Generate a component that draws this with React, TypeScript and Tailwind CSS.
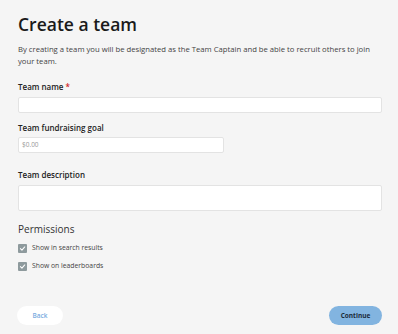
import React from "react";

const font = { fontFamily: '"Open Sans", "Noto Sans", sans-serif' };

function Check({ label }: { label: string }) {
  return (
    <div className="flex items-center h-[12px] gap-[5px]">
      <div className="w-[9px] h-[9px] rounded-[1px] bg-[#8e9a9d] flex items-center justify-center">
        <svg width="7" height="7" viewBox="0 0 10 10">
          <path d="M2 5.2 L4.2 7.3 L8.2 2.8" fill="none" stroke="#ffffff" strokeWidth="1.5" strokeLinecap="round" strokeLinejoin="round" />
        </svg>
      </div>
      <span className="text-[6.8px] leading-[12px] text-[#444]">{label}</span>
    </div>
  );
}

export default function App() {
  return (
    <div style={font} className="w-[398px] h-[334px] bg-[#f5f5f5] pl-[18px] pr-[16px] pt-[12px] pb-[9px] flex flex-col text-[#222]">
      <h1 className="text-[17.5px] leading-[24px] font-semibold text-[#1a1a1a]">Create a team</h1>
      <p className="mt-[7px] text-[7.7px] leading-[12px] text-[#444] pr-[4px]">
        By creating a team you will be designated as the Team Captain and be able to recruit others to join your team.
      </p>

      <label className="mt-[14px] text-[8px] leading-[12px] font-semibold text-[#222]">
        Team name <span className="text-[#d0242b]">*</span>
      </label>
      <div className="mt-[4px] h-[16px] w-[364px] bg-white border border-[#e3e3e3] rounded-[2px]" />

      <label className="mt-[9px] text-[8px] leading-[12px] font-semibold text-[#222]">Team fundraising goal</label>
      <div className="mt-[3px] h-[16px] w-[206px] bg-white border border-[#e3e3e3] rounded-[2px] flex items-center px-[3px]">
        <span className="text-[6.5px] text-[#999]">$0.00</span>
      </div>

      <label className="mt-[16px] text-[8px] leading-[12px] font-semibold text-[#222]">Team description</label>
      <div className="mt-[4px] h-[26px] w-[364px] bg-white border border-[#e3e3e3] rounded-[2px]" />

      <h2 className="mt-[11px] text-[10px] leading-[14px] text-[#333]">Permissions</h2>
      <div className="mt-[6px] flex flex-col gap-[6px]">
        <Check label="Show in search results" />
        <Check label="Show on leaderboards" />
      </div>

      <div className="mt-auto flex justify-between items-center">
        <button className="h-[19px] w-[46px] ml-[-1px] rounded-full bg-white text-[6.5px] text-[#7aace0] font-semibold">Back</button>
        <button className="h-[19px] w-[53px] rounded-full bg-[#82b4e0] text-[6.5px] text-[#1a2a3a] font-bold">Continue</button>
      </div>
    </div>
  );
}
